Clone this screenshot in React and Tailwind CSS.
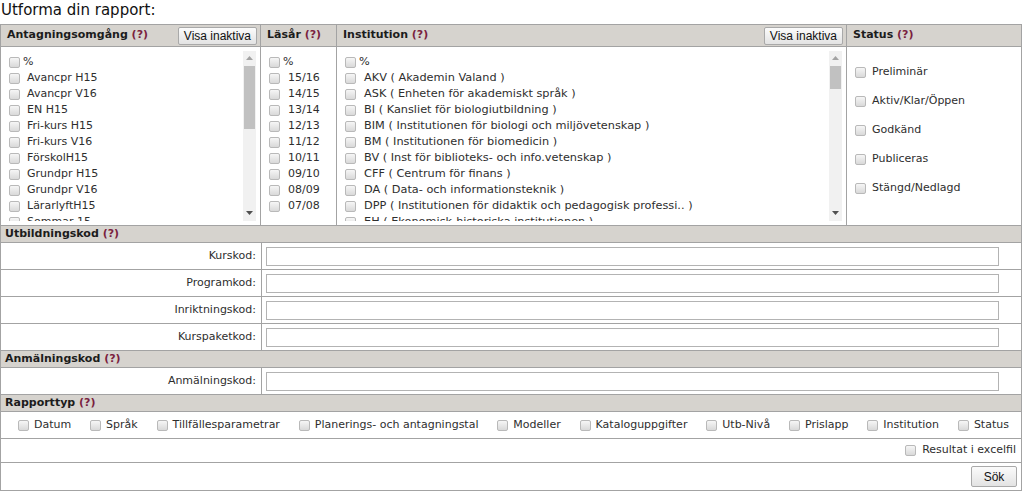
import React from "react";

const Q = () => <span className="text-[#7b1f3f]">(?)</span>;

const Box = () => (
  <span className="inline-block w-[11px] h-[11px] border border-[#b9b9b9] rounded-[2px] bg-gradient-to-b from-[#f6f6f6] to-[#d9d9d9] shrink-0" />
);

const Btn = ({ children, cls = "" }) => (
  <span className={"inline-flex items-center justify-center h-[18px] px-[5px] border border-[#a9a9a9] bg-gradient-to-b from-[#fbfbfb] to-[#e3e3e3] rounded-[2px] text-[12px] font-normal text-[#111] font-['Liberation_Sans',Arial,sans-serif] " + cls}>
    {children}
  </span>
);

const Scroll = ({ thumbTop, thumbH }) => (
  <div className="relative w-[13px] h-full bg-[#f1f1f1] shrink-0">
    <svg className="absolute left-[3px] top-[5px]" width="7" height="4" viewBox="0 0 7 4">
      <path d="M0 4 L3.5 0 L7 4 Z" fill="#a3a3a3" />
    </svg>
    <div className="absolute left-[1px] right-[1px] bg-[#c1c1c1]" style={{ top: thumbTop, height: thumbH }} />
    <svg className="absolute left-[3px] bottom-[6px]" width="7" height="4" viewBox="0 0 7 4">
      <path d="M0 0 L3.5 4 L7 0 Z" fill="#505050" />
    </svg>
  </div>
);

const Item = ({ label, first, indent = "pl-[5px]" }) => (
  <div className="flex items-center h-[16px] gap-[2px] whitespace-nowrap">
    <Box />
    <span className={first ? "pl-[1px]" : indent}>{label}</span>
  </div>
);

const antag = ["Avancpr H15", "Avancpr V16", "EN H15", "Fri-kurs H15", "Fri-kurs V16", "FörskolH15", "Grundpr H15", "Grundpr V16", "LärarlyftH15", "Sommar 15"];
const lasar = ["15/16", "14/15", "13/14", "12/13", "11/12", "10/11", "09/10", "08/09", "07/08"];
const inst = [
  "AKV ( Akademin Valand )",
  "ASK ( Enheten för akademiskt språk )",
  "BI ( Kansliet för biologiutbildning )",
  "BIM ( Institutionen för biologi och miljövetenskap )",
  "BM ( Institutionen för biomedicin )",
  "BV ( Inst för biblioteks- och info.vetenskap )",
  "CFF ( Centrum för finans )",
  "DA ( Data- och informationsteknik )",
  "DPP ( Institutionen för didaktik och pedagogisk professi.. )",
  "EH ( Ekonomisk-historiska institutionen )",
];
const status = ["Preliminär", "Aktiv/Klar/Öppen", "Godkänd", "Publiceras", "Stängd/Nedlagd"];
const rapport = ["Datum", "Språk", "Tillfällesparametrar", "Planerings- och antagningstal", "Modeller", "Kataloguppgifter", "Utb-Nivå", "Prislapp", "Institution", "Status"];

const Head = ({ children, cls = "" }) => (
  <div className={"h-[22px] bg-[#d6d3ce] border-b border-[#a3a3a3] flex items-center justify-between pl-[6px] pr-[3px] font-bold text-[#1c1c1c] " + cls}>
    {children}
  </div>
);

const SecHead = ({ children }) => (
  <div className="h-[17px] bg-[#d6d3ce] border-b border-[#a3a3a3] flex items-center pl-[4px] font-bold text-[#1c1c1c]">
    {children}
  </div>
);

const FieldRow = ({ label }) => (
  <div className="grid grid-cols-[261px_1fr] h-[27px] border-b border-[#a3a3a3]">
    <div className="border-r border-[#a3a3a3] flex items-center justify-end pr-[5px]">{label}</div>
    <div className="flex items-center pl-[4px]">
      <div className="w-[733px] h-[19px] border border-[#b3b3b3] bg-white" />
    </div>
  </div>
);

export default function App() {
  return (
    <div className="w-[1024px] h-[495px] bg-white text-[#2e2e2e] text-[11px] font-['DejaVu_Sans',Verdana,sans-serif] overflow-hidden">
      <div className="h-[24px] text-[15px] leading-[20px] pl-[1px] text-[#111]">Utforma din rapport:</div>
      <div className="w-[1022px] border border-[#a3a3a3] border-b-[#a3a3a3]">
        <div className="grid grid-cols-[260px_76px_510px_1fr]">
          <div className="border-r border-[#a3a3a3]">
            <Head>
              <span>Antagningsomgång <Q /></span>
              <Btn>Visa inaktiva</Btn>
            </Head>
            <div className="h-[178px] pt-[4px] pl-[6px] pr-[4px]">
              <div className="flex h-[170px]">
                <div className="flex-1 overflow-hidden pt-[3px] pl-[2px]">
                  <Item label="%" first />
                  {antag.map((a) => <Item key={a} label={a} />)}
                </div>
                <Scroll thumbTop={15} thumbH={63} />
              </div>
            </div>
          </div>
          <div className="border-r border-[#a3a3a3]">
            <Head><span>Läsår <Q /></span></Head>
            <div className="h-[178px] pt-[7px] pl-[8px]">
              <Item label="%" first />
              {lasar.map((a) => <Item key={a} label={a} indent="pl-[6px]" />)}
            </div>
          </div>
          <div className="border-r border-[#a3a3a3]">
            <Head>
              <span>Institution <Q /></span>
              <Btn>Visa inaktiva</Btn>
            </Head>
            <div className="h-[178px] pt-[4px] pl-[6px] pr-[4px]">
              <div className="flex h-[170px]">
                <div className="flex-1 overflow-hidden pt-[3px] pl-[2px] text-[11.3px]">
                  <Item label="%" first />
                  {inst.map((a) => <Item key={a} label={a} indent="pl-[6px]" />)}
                </div>
                <Scroll thumbTop={15} thumbH={23} />
              </div>
            </div>
          </div>
          <div>
            <Head><span>Status <Q /></span></Head>
            <div className="h-[178px] pt-[17px] pl-[8px]">
              {status.map((s) => (
                <div key={s} className="flex items-center h-[29px] gap-[6px] pb-[12px]">
                  <Box />
                  <span>{s}</span>
                </div>
              ))}
            </div>
          </div>
        </div>
        <div className="border-t border-[#a3a3a3]">
          <SecHead><span>Utbildningskod <Q /></span></SecHead>
          <FieldRow label="Kurskod:" />
          <FieldRow label="Programkod:" />
          <FieldRow label="Inriktningskod:" />
          <FieldRow label="Kurspaketkod:" />
          <SecHead><span>Anmälningskod <Q /></span></SecHead>
          <FieldRow label="Anmälningskod:" />
          <SecHead><span>Rapporttyp <Q /></span></SecHead>
          <div className="h-[27px] border-b border-[#a3a3a3] flex items-center justify-between pl-[17px] pr-[12px]">
            {rapport.map((r) => (
              <div key={r} className="flex items-center gap-[5px]">
                <Box />
                <span>{r}</span>
              </div>
            ))}
          </div>
          <div className="h-[24px] border-b border-[#a3a3a3] flex items-center justify-end pr-[5px] gap-[6px]">
            <Box />
            <span>Resultat i excelfil</span>
          </div>
          <div className="h-[27px] flex items-center justify-end pr-[4px]">
            <Btn cls="w-[46px] h-[21px]">Sök</Btn>
          </div>
        </div>
      </div>
    </div>
  );
}
